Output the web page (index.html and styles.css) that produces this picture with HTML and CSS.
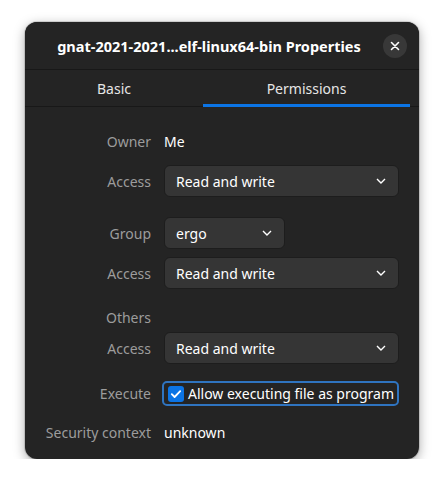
FILE: index.html
```html
<!DOCTYPE html>
<html>
<head>
<meta charset="utf-8">
<link rel="stylesheet" href="styles.css">
</head>
<body>
<div class="window">
  <div class="header">
    <div class="title">gnat-2021-2021...elf-linux64-bin Properties</div>
    <button class="close" aria-label="Close">
      <svg width="10" height="10" viewBox="0 0 10 10"><path d="M1.5 1.5 L8.5 8.5 M8.5 1.5 L1.5 8.5" stroke="#ffffff" stroke-width="1.6" stroke-linecap="round"/></svg>
    </button>
  </div>
  <div class="tabs">
    <div class="tab">Basic</div>
    <div class="tab active">Permissions</div>
  </div>
  <div class="content">
    <div class="row r-owner">
      <div class="label">Owner</div>
      <div class="value">Me</div>
    </div>
    <div class="row r-access1">
      <div class="label">Access</div>
      <div class="dropdown wide"><span>Read and write</span><svg class="chev" width="10" height="6" viewBox="0 0 10 6"><path d="M1 1 L5 5 L9 1" fill="none" stroke="#ffffff" stroke-width="1.4"/></svg></div>
    </div>
    <div class="row r-group">
      <div class="label">Group</div>
      <div class="dropdown narrow"><span>ergo</span><svg class="chev" width="10" height="6" viewBox="0 0 10 6"><path d="M1 1 L5 5 L9 1" fill="none" stroke="#ffffff" stroke-width="1.4"/></svg></div>
    </div>
    <div class="row r-access2">
      <div class="label">Access</div>
      <div class="dropdown wide"><span>Read and write</span><svg class="chev" width="10" height="6" viewBox="0 0 10 6"><path d="M1 1 L5 5 L9 1" fill="none" stroke="#ffffff" stroke-width="1.4"/></svg></div>
    </div>
    <div class="row r-others">
      <div class="label">Others</div>
      <div class="value"></div>
    </div>
    <div class="row r-access3">
      <div class="label">Access</div>
      <div class="dropdown wide"><span>Read and write</span><svg class="chev" width="10" height="6" viewBox="0 0 10 6"><path d="M1 1 L5 5 L9 1" fill="none" stroke="#ffffff" stroke-width="1.4"/></svg></div>
    </div>
    <div class="row r-exec">
      <div class="label">Execute</div>
      <div class="check-focus">
        <span class="checkbox"><svg width="16" height="16" viewBox="0 0 16 16"><path d="M3.8 8.2 L6.6 11 L12.2 5.2" fill="none" stroke="#ffffff" stroke-width="1.8" stroke-linecap="round" stroke-linejoin="round"/></svg></span>
        <span class="check-text">Allow executing file as program</span>
      </div>
    </div>
    <div class="row r-sec">
      <div class="label">Security context</div>
      <div class="value">unknown</div>
    </div>
  </div>
</div>
</body>
</html>
```

FILE: styles.css
```css
html, body {
  margin: 0;
  padding: 0;
  background: #ffffff;
}
body {
  padding: 22px 0 0 25px;
  font-family: "Noto Sans", "Open Sans", sans-serif;
  font-size: 14px;
  color: #ffffff;
}
.window {
  width: 394px;
  height: 437px;
  background: #242424;
  border-radius: 12px;
  box-shadow: 0 3px 12px rgba(0,0,0,0.35), 0 0 0 1px rgba(0,0,0,0.12);
  overflow: hidden;
  display: flex;
  flex-direction: column;
}
.header {
  height: 47px;
  display: flex;
  align-items: center;
  padding: 0 12px 0 18px;
  border-bottom: 1px solid #181818;
  background: #242424;
}
.title {
  flex: 1;
  text-align: center;
  font-weight: bold;
  font-size: 14.5px;
  color: #ffffff;
  white-space: nowrap;
}
.close {
  width: 24px;
  height: 24px;
  border-radius: 50%;
  border: none;
  background: #383838;
  display: flex;
  align-items: center;
  justify-content: center;
  padding: 0;
  margin-left: 8px;
  flex: none;
}
.tabs {
  height: 36px;
  display: grid;
  grid-template-columns: 178px 207px;
  border-bottom: 1px solid #181818;
}
.tab {
  display: flex;
  align-items: center;
  justify-content: center;
  color: #e6e6e6;
  font-size: 14px;
}
.tab.active {
  box-shadow: inset 0 -3px 0 #0b74e5;
  margin-bottom: -1px;
  position: relative;
  z-index: 1;
}
.content {
  padding: 24px 20px 0 0;
  display: flex;
  flex-direction: column;
}
.row {
  display: flex;
  align-items: center;
  gap: 13px;
}
.label {
  width: 126px;
  flex: none;
  text-align: right;
  color: #9c9c9c;
}
.value {
  color: #ffffff;
}
.r-owner { height: 20px; }
.r-access1 { margin-top: 14px; }
.r-group { margin-top: 20px; }
.r-access2 { margin-top: 8px; }
.r-others { margin-top: 18px; height: 20px; }
.r-access3 { margin-top: 5px; }
.r-exec { margin-top: 17px; }
.r-sec { margin-top: 16px; height: 20px; }
.dropdown {
  height: 32px;
  box-sizing: border-box;
  background: #353535;
  border: 1px solid #1d1d1d;
  border-radius: 6px;
  display: flex;
  align-items: center;
  justify-content: space-between;
  padding: 0 12px 0 11px;
  color: #ffffff;
}
.dropdown.wide { width: 235px; }
.dropdown.narrow { width: 121px; }
.chev { flex: none; }
.check-focus {
  margin-left: -2px;
  width: 240px;
  height: 25px;
  box-sizing: border-box;
  border: 2px solid #2f74c0;
  border-radius: 5px;
  display: flex;
  align-items: center;
  padding-left: 4px;
  gap: 4px;
}
.checkbox {
  width: 16px;
  height: 16px;
  border-radius: 3px;
  background: #0b74e5;
  display: flex;
  flex: none;
}
.check-text {
  color: #ffffff;
  white-space: nowrap;
}
```
